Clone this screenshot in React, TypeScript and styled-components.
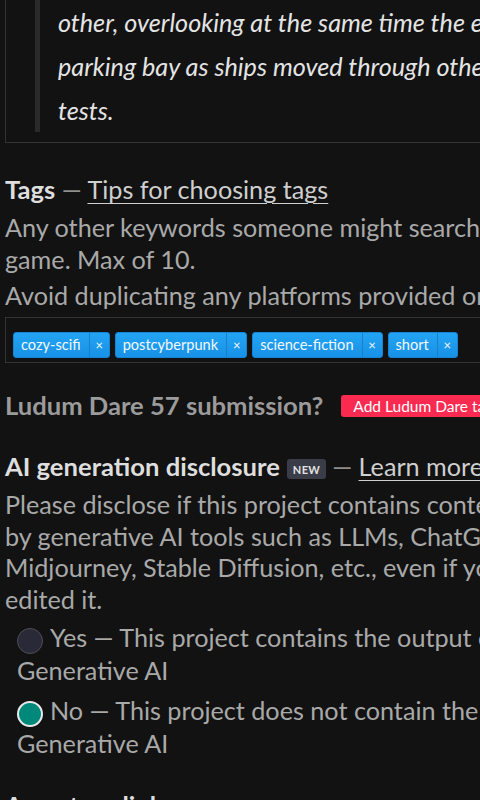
import styled, { createGlobalStyle } from 'styled-components';

const GlobalStyle = createGlobalStyle`
  html, body { margin: 0; padding: 0; background: #121212; overflow: hidden; }
  body {
    font-family: Lato, "Noto Sans", sans-serif; -webkit-font-smoothing: antialiased;
    font-feature-settings: "liga" 1, "rlig" 0, "calt" 0, "dlig" 0, "clig" 0;
  }
`;

const Page = styled.div`
  width: 1000px; padding: 0 0 40px 5px;
  color: #a9a9a9; font-size: 25.2px;
`;

const EditorBox = styled.div`
  border: 1px solid #333; border-top: none;
  padding: 0 0 10px 29px;
`;

const Quote = styled.blockquote`
  margin: 0; padding-left: 18px;
  border-left: 5px solid #2a2a2a;
  font-style: italic; color: #e4e4e4; line-height: 44px;
`;

const Field = styled.div<{ top: number }>`
  margin-top: ${p => p.top}px;
`;

const Label = styled.div`
  line-height: 32px; color: #8f8f8f;
`;

const LabelTitle = styled.strong<{ muted?: boolean }>`
  font-weight: 700; font-size: 25.6px;
  color: ${p => p.muted ? '#9b9b9b' : '#dedede'};
`;

const Link = styled.a`
  color: #cfcfcf; text-decoration: underline;
  text-underline-offset: 4px; text-decoration-thickness: 1px;
`;

const Hint = styled.p<{ top: number; lh?: number }>`
  margin: ${p => p.top}px 0 0; line-height: ${p => p.lh ?? 32}px; color: #a9a9a9;
`;

const TagBox = styled.div`
  margin-top: 6px;
  border: 1px solid #333;
  padding: 14px 0 4px 7px;
  display: flex; gap: 4px;
`;

const Tag = styled.div`
  display: flex; height: 26px; box-sizing: border-box;
  border: 1px solid #1684d6; border-radius: 3px;
  background: linear-gradient(#23a4f3, #1891e6);
  color: #f2f9ff; font-size: 14.6px; line-height: 24px;
  margin-right: 1px;
`;

const TagText = styled.span`padding: 0 8px 0 7px;`;

const TagRemove = styled.span`
  width: 19px; text-align: center; font-size: 13px;
  border-left: 1px solid #1a7fc9;
`;

const JamRow = styled.div`
  margin-top: 26px; display: flex; align-items: center; gap: 18px;
  line-height: 32px;
`;

const JamButton = styled.button`
  height: 22px; padding: 0 12px; margin-top: 2px;
  border: none; border-radius: 3px;
  background: #fb2a50; color: #fff;
  font-family: inherit; font-size: 15.5px; line-height: 22px;
  white-space: nowrap;
`;

const NewBadge = styled.span`
  display: inline-block; vertical-align: 2px;
  margin: 0 6px 0 7px; padding: 0 6px;
  height: 20px; line-height: 21px;
  background: #3a3c48; border-radius: 3px;
  color: #e2e2e2; font-size: 11px; font-weight: 700; letter-spacing: 0.3px;
`;

const RadioLabel = styled.label<{ top: number }>`
  display: block; margin-top: ${p => p.top}px;
  padding-left: 12px; line-height: 33px; color: #a9a9a9;
`;

const Radio = styled.span<{ checked?: boolean }>`
  display: inline-block; vertical-align: middle;
  width: 26px; height: 26px; box-sizing: border-box; border-radius: 50%;
  margin-right: 7px;
  background: ${p => p.checked ? '#00897a' : '#2a2937'};
  border: ${p => p.checked ? '2px solid #e9e9e9' : '1.5px solid #4e4d58'};
`;

const tags = ['cozy-scifi', 'postcyberpunk', 'science-fiction', 'short'];

export default function App() {
  return (
    <Page>
      <GlobalStyle />
      <EditorBox>
        <Quote>
          other, overlooking at the same time the exterior<br />
          parking bay as ships moved through other<br />
          tests.
        </Quote>
      </EditorBox>

      <Field top={30}>
        <Label><LabelTitle>Tags</LabelTitle> — <Link>Tips for choosing tags</Link></Label>
        <Hint top={6}>
          Any other keywords someone might search to find your<br />
          game. Max of 10.
        </Hint>
        <Hint top={4}>Avoid duplicating any platforms provided on this page.</Hint>
        <TagBox>
          {tags.map(t => (
            <Tag key={t}>
              <TagText>{t}</TagText>
              <TagRemove>×</TagRemove>
            </Tag>
          ))}
        </TagBox>
      </Field>

      <JamRow>
        <LabelTitle muted>Ludum Dare 57 submission?</LabelTitle>
        <JamButton>Add Ludum Dare tags</JamButton>
      </JamRow>

      <Field top={29}>
        <Label>
          <LabelTitle>AI generation disclosure</LabelTitle>
          <NewBadge>NEW</NewBadge>— <Link>Learn more</Link>
        </Label>
        <Hint top={7} lh={31.5}>
          Please disclose if this project contains content generated<br />
          by generative AI tools such as LLMs, ChatGPT,<br />
          Midjourney, Stable Diffusion, etc., even if you have<br />
          edited it.
        </Hint>
        <RadioLabel top={6}>
          <Radio />Yes — This project contains the output of<br />
          Generative AI
        </RadioLabel>
        <RadioLabel top={7}>
          <Radio checked />No — This project does not contain the output of<br />
          Generative AI
        </RadioLabel>
      </Field>

      <Field top={29}>
        <Label><LabelTitle>App store links</LabelTitle></Label>
      </Field>
    </Page>
  );
}
